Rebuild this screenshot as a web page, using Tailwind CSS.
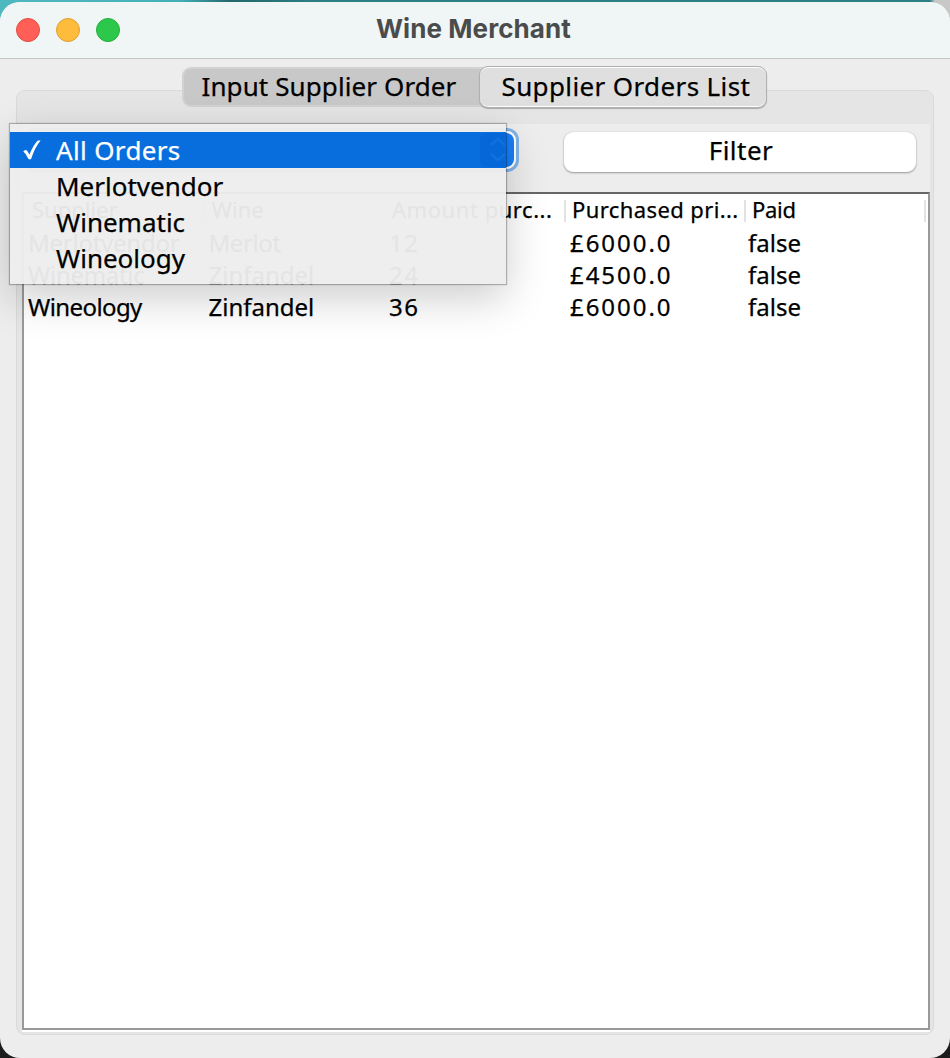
<!DOCTYPE html>
<html lang="en">
<head>
<meta charset="utf-8">
<title>Wine Merchant</title>
<script src="https://cdn.jsdelivr.net/npm/@tailwindcss/browser@4"></script>
</head>
<body class="h-[1058px] w-[950px] overflow-hidden bg-[#1c1c1c] text-black">
<div class="h-full bg-[linear-gradient(90deg,#4fb8bf_0,#43b0b8_180px,#24686c_230px,#2c8084_320px,#2c8084_930px,#c8c8c8_935px)] bg-[length:950px_30px] bg-no-repeat pt-[2px]">
<main class="relative flex h-[1056px] flex-col rounded-[20px] bg-[#ededed] font-['Noto_Sans',sans-serif] [-webkit-text-stroke:0.25px]">
  <header class="relative flex h-[57px] shrink-0 items-center rounded-t-[20px] border-b border-[#c4c6c6] bg-[#f0f6f6] pl-4">
    <div class="flex gap-4">
      <span class="size-6 rounded-full border border-[#e24b41] bg-[#ff5f57]"></span>
      <span class="size-6 rounded-full border border-[#e1a032] bg-[#febc3c]"></span>
      <span class="size-6 rounded-full border border-[#24ae3a] bg-[#2bc84b]"></span>
    </div>
    <h1 class="absolute top-[11px] left-[376px] font-['Inter',sans-serif] text-[26px] leading-8 font-bold tracking-[0.08px] whitespace-nowrap text-[#4a4c4c] [-webkit-text-stroke:0]">Wine Merchant</h1>
  </header>

  <section class="mx-4 mt-[31px] flex h-[945px] flex-col rounded-[9px] border border-[#dadada] bg-[#e5e5e5] pr-[3px] pl-[5px]">
    <nav class="z-10 mx-auto -mt-[25px] flex h-[42px] w-[585px] shrink-0 -translate-x-[2px] text-[26px] whitespace-nowrap">
      <div class="my-px w-[305px] rounded-l-[9px] border-2 border-[#d2d2d2] bg-[#c8c8c8] pl-[18px] leading-[34px] tracking-[0.1px]">Input Supplier Order</div>
      <div class="-ml-[8px] w-[288px] rounded-[9px] border border-[#b0b0b0] bg-[#dfdfdf] pl-[22px] leading-[38px] tracking-[0.38px] shadow-[inset_0_1px_0_#fff,inset_0_-1px_0_#fff,0_1px_1px_#aaa]">Supplier Orders List</div>
    </nav>
    <div class="mt-4 flex h-[908px] flex-col bg-[#ededed]">
      <div class="flex h-[68px] shrink-0 justify-end gap-[45px] pt-2 pr-[14px]">
        <div class="-mt-[4px] h-[44px] w-[496px] rounded-[12px] border-[3px] border-[#82b3e8] bg-white p-[2px]">
          <div class="ml-auto flex h-full w-[36px] items-center justify-center rounded-[8px] bg-[#177ef6]">
            <svg class="h-6 w-4" viewBox="0 0 16 24" fill="none" stroke="#fff" stroke-width="2.5"><path d="M2 8l6-6 6 6M2 16l6 6 6-6"/></svg>
          </div>
        </div>
        <button class="h-10 w-[352px] rounded-[9px] bg-white pb-1 pl-[2px] text-[26px] leading-[34px] tracking-[0.5px] shadow-[0_1px_2px_#999,0_0_1px_#aaa]">Filter</button>
      </div>
      <div class="h-[838px] shrink-0 border-2 border-[#999] border-t-[#666] bg-white">
        <div class="grid h-[34px] grid-cols-[180.5px_180.5px_181px_180px_1fr] text-[22px] leading-[31px] whitespace-nowrap">
          <div class="relative pl-2">Supplier<i class="absolute top-[6px] right-0 h-[22px] w-0.5 bg-[#e2e2e2]"></i></div>
          <div class="relative pl-[7px]">Wine<i class="absolute top-[6px] right-0 h-[22px] w-0.5 bg-[#e2e2e2]"></i></div>
          <div class="relative pl-[7px] tracking-[0.55px]">Amount purc...<i class="absolute top-[6px] right-0 h-[22px] w-0.5 bg-[#e2e2e2]"></i></div>
          <div class="relative pl-[6px] tracking-[0.4px]">Purchased pri...<i class="absolute top-[6px] right-0 h-[22px] w-0.5 bg-[#e2e2e2]"></i></div>
          <div class="relative pl-[6px] tracking-[-0.3px]">Paid<i class="absolute top-[6px] right-[2px] h-[22px] w-0.5 bg-[#e2e2e2]"></i></div>
        </div>
        <div class="grid auto-rows-[32px] grid-cols-[180.5px_180.5px_181px_178px_1fr] pl-1 text-[24px] leading-[30px] whitespace-nowrap">
          <div class="tracking-[-0.25px]">Merlotvendor</div><div class="tracking-[-0.4px]">Merlot</div><div class="tracking-[1.6px]">12</div><div class="tracking-[1.95px]">£6000.0</div><div>false</div>
          <div class="tracking-[-0.3px]">Winematic</div><div>Zinfandel</div><div class="tracking-[1.6px]">24</div><div class="tracking-[1.95px]">£4500.0</div><div>false</div>
          <div class="tracking-[-0.6px]">Wineology</div><div>Zinfandel</div><div class="tracking-[1.6px]">36</div><div class="tracking-[1.95px]">£6000.0</div><div>false</div>
        </div>
      </div>
      <div class="h-0.5 bg-white"></div>
    </div>
  </section>

  <ul class="absolute top-[122px] left-[10px] z-20 h-[160px] w-[496px] bg-[#ededed]/96 pt-2 text-[26px] leading-[36px] whitespace-nowrap shadow-[0_0_1px_1px_#0004,0_14px_40px_#0003]">
    <li class="flex h-9 items-center bg-[#086edd] text-white"><svg class="mr-[15px] ml-[13px] h-5 w-[18px]" viewBox="0 0 18 20" fill="#fff"><path d="M0.3 11.6Q2 9.2 4 10.6L6.4 14.6Q10.5 4.8 14.8.6H17.6Q11.8 7.6 8.3 18.6Q6.6 20.4 5.2 18.4Q3.2 14 .3 11.6z"/></svg><span class="tracking-[0.35px]">All Orders</span>
      <svg class="ml-auto h-9 w-[26px]" viewBox="0 0 26 36" fill="none"><path d="M26 1H8Q0 1 0 9V27Q0 35 8 35H26z" fill="#0668d8"/><path d="M11 13l7-6 7 6M11 22l7 6 7-6" stroke="#0f72dc" stroke-width="2.5"/></svg></li>
    <li class="h-9 pl-[46px]">Merlotvendor</li>
    <li class="h-9 pl-[46px]">Winematic</li>
    <li class="h-9 pl-[46px]">Wineology</li>
  </ul>
</main>
</div>
</body>
</html>
